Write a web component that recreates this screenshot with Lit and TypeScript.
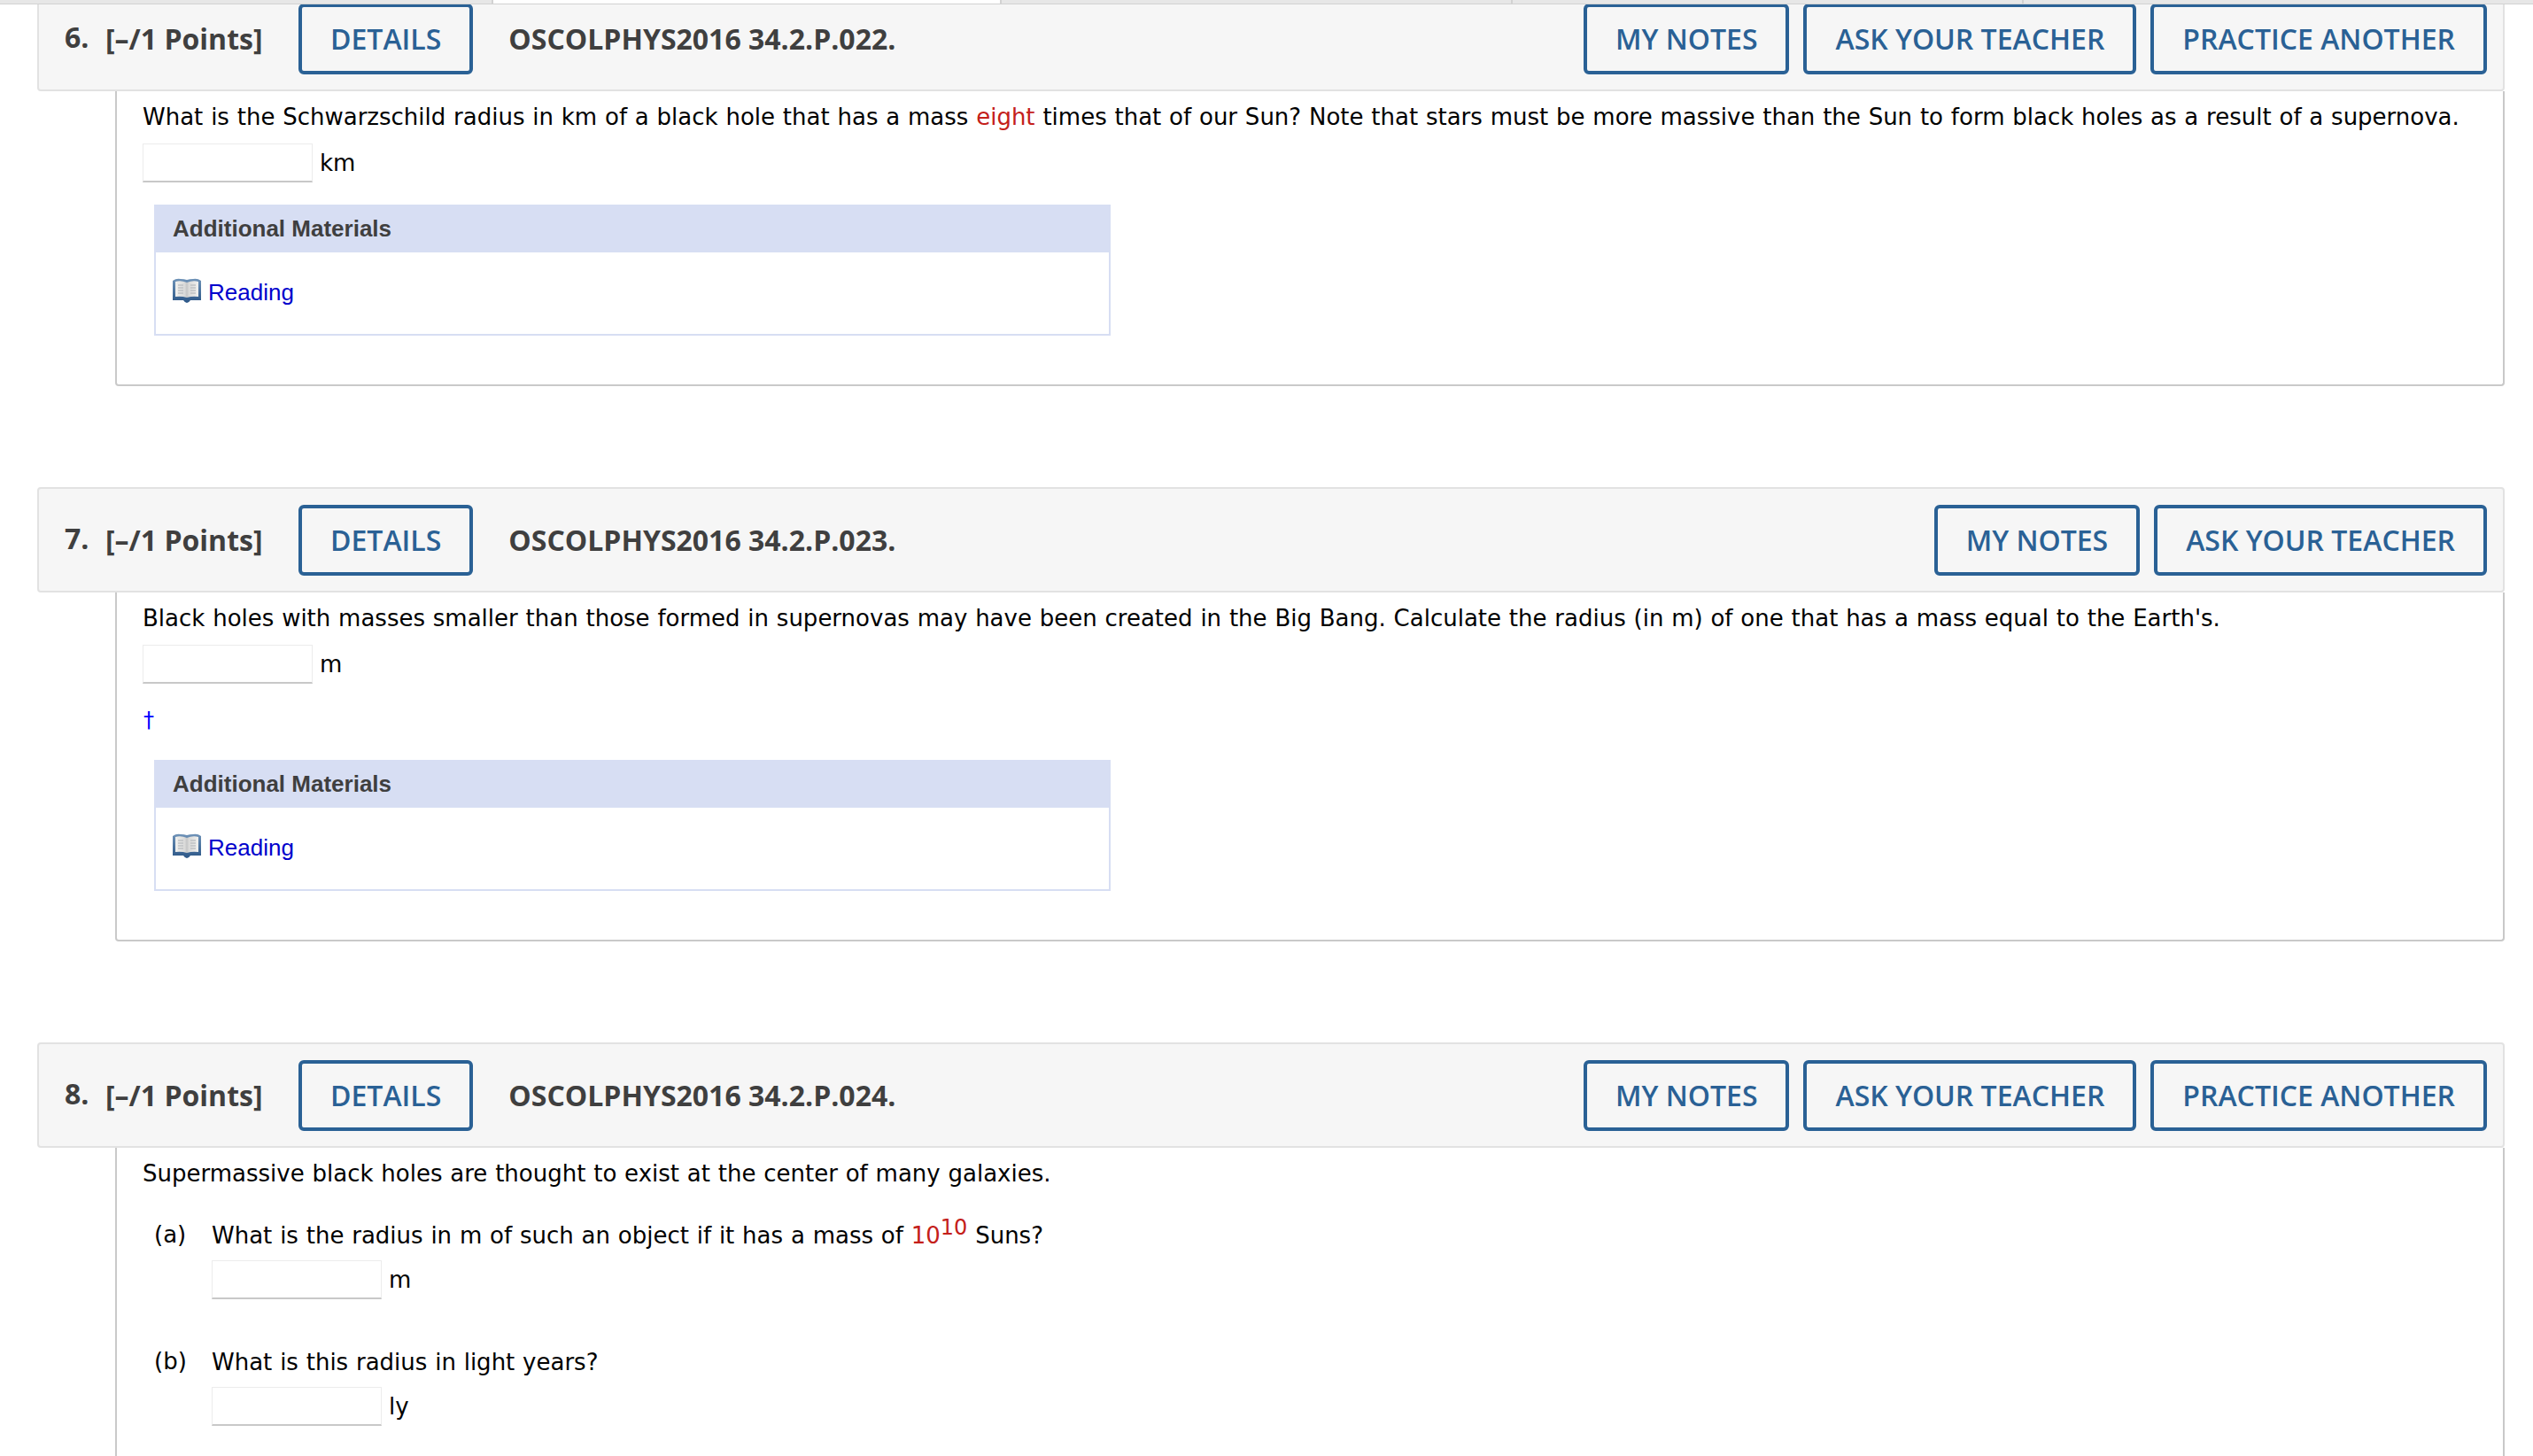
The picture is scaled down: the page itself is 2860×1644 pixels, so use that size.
import { LitElement, css, html, nothing } from "lit";
import { customElement } from "lit/decorators.js";

interface Question {
  num: number;
  code: string;
  practice: boolean;
}

const bookIcon = html`
  <svg class="book" viewBox="0 0 32 28" width="32" height="28" aria-hidden="true">
    <defs>
      <linearGradient id="cover" x1="0" y1="0" x2="0" y2="1">
        <stop offset="0" stop-color="#6f93b8" />
        <stop offset="1" stop-color="#2b5687" />
      </linearGradient>
      <linearGradient id="pages" x1="0" y1="0" x2="1" y2="0">
        <stop offset="0" stop-color="#f0f0ee" />
        <stop offset="0.42" stop-color="#d9d9d8" />
        <stop offset="0.5" stop-color="#c4c5c6" />
        <stop offset="0.58" stop-color="#d9d9d8" />
        <stop offset="1" stop-color="#f0f0ee" />
      </linearGradient>
    </defs>
    <path d="M0 3 Q4 0 9 1 Q13 1 16 2 Q19 1 23 1 Q28 0 32 3 V25 H20 Q18 28 16 28 Q14 28 12 25 H0 Z" fill="url(#cover)" />
    <path d="M3 4 Q9 2 16 5 Q23 2 29 4 V21 Q22 20 16 22 Q10 20 3 21 Z" fill="url(#pages)" />
    <path d="M6 8 H12 M6 11 H12 M6 14 H12 M6 17 H12 M20 8 H26 M20 11 H26 M20 14 H26 M20 17 H26" stroke="#bfc1c4" stroke-width="1.3" />
  </svg>
`;

@customElement("app-root")
export class AppRoot extends LitElement {
  static styles = css`
    :host {
      display: block;
      height: 1644px;
      overflow: hidden;
      position: relative;
      background: #fff;
      font-family: "DejaVu Sans", Verdana, sans-serif;
      font-size: 26px;
      word-spacing: 0.55px;
      color: #000;
    }
    .topbar {
      position: absolute;
      top: 0;
      left: 0;
      right: 0;
      height: 5px;
      display: flex;
      border-bottom: 1px solid #d2d2d2;
      box-sizing: border-box;
      background: #e7e7e7;
    }
    .tab {
      box-sizing: border-box;
      border-right: 2px solid #d2d2d2;
      flex: none;
    }
    .tab.first {
      width: 557px;
    }
    .tab.active {
      width: 574px;
      background: #fff;
    }
    .tab.plain {
      width: 577px;
    }
    .page {
      margin-top: -16px;
      padding-left: 42px;
      width: 2786px;
      display: flex;
      flex-direction: column;
      gap: 114px;
    }
    .head {
      display: flex;
      align-items: center;
      height: 119px;
      box-sizing: border-box;
      padding: 0 18px 0 29px;
      background: #f6f6f6;
      border: 2px solid #e2e2e2;
      border-radius: 4px;
      font-family: "Open Sans", sans-serif;
      font-weight: 700;
      font-size: 32px;
      word-spacing: 0;
      color: #3f3f3f;
    }
    .num {
      width: 46px;
      position: relative;
      top: -2px;
      flex: none;
    }
    .points {
      width: 218px;
      flex: none;
    }
    .code {
      margin-left: 40px;
    }
    .spacer {
      flex: 1;
    }
    .btn {
      box-sizing: border-box;
      height: 80px;
      padding: 0 32px;
      display: flex;
      align-items: center;
      border: 4px solid #2a6195;
      border-radius: 6px;
      color: #2a6195;
      font-weight: 600;
      font-size: 32px;
      white-space: nowrap;
    }
    .right {
      display: flex;
      gap: 16px;
    }
    .body {
      margin-left: 88px;
      padding: 0 30px 0 29px;
      border: 2px solid #c9c9c9;
      border-top: none;
      border-radius: 0 0 4px 4px;
      box-sizing: border-box;
    }
    .body.open {
      padding-bottom: 200px;
    }
    p {
      margin: 0;
      line-height: 32px;
      white-space: nowrap;
    }
    .lead {
      padding-top: 13px;
    }
    .red {
      color: #c4201a;
    }
    sup {
      font-size: 24px;
      line-height: 0;
    }
    .answer {
      display: flex;
      align-items: center;
      gap: 8px;
      margin-top: 14px;
    }
    .field {
      width: 192px;
      height: 44px;
      box-sizing: border-box;
      border: 1px solid #ececec;
      border-bottom: 2px solid #c8c8c8;
      background: #fff;
    }
    .dagger {
      margin-top: 26px;
      color: #0000ff;
      line-height: 30px;
      font-size: 24px;
      padding-left: 1px;
    }
    .materials {
      margin: 25px 0 55px 13px;
      width: 1080px;
      box-sizing: border-box;
      height: 148px;
      border: 2px solid #d7def3;
      border-top: none;
    }
    .dagger + .materials {
      margin-top: 30px;
    }
    .materials h4 {
      margin: 0 -2px;
      height: 54px;
      line-height: 54px;
      padding-left: 21px;
      background: #d7def3;
      font-family: "Liberation Sans", Arial, sans-serif;
      font-size: 26px;
      font-weight: 700;
      word-spacing: 0;
      color: #3f3f3f;
    }
    .reading {
      display: flex;
      align-items: center;
      gap: 8px;
      padding: 27px 0 0 19px;
      font-family: "Liberation Sans", Arial, sans-serif;
      font-size: 26px;
      color: #0000cc;
    }
    .reading span {
      position: relative;
      top: 3px;
    }
    .book {
      flex: none;
    }
    .part {
      display: grid;
      grid-template-columns: 65px 1fr;
      padding-left: 13px;
    }
    .part-a {
      margin-top: 38px;
    }
    .part-b {
      margin-top: 55px;
    }
    .part .answer {
      margin-top: 12px;
    }
  `;

  private header(q: Question) {
    return html`
      <div class="head">
        <span class="num">${q.num}.</span>
        <span class="points">[–/1 Points]</span>
        <span class="btn">DETAILS</span>
        <span class="code">${q.code}</span>
        <span class="spacer"></span>
        <div class="right">
          <span class="btn">MY NOTES</span>
          <span class="btn">ASK YOUR TEACHER</span>
          ${q.practice ? html`<span class="btn">PRACTICE ANOTHER</span>` : nothing}
        </div>
      </div>
    `;
  }

  private answer(unit: string) {
    return html`<div class="answer"><div class="field"></div><span>${unit}</span></div>`;
  }

  private materials() {
    return html`
      <div class="materials">
        <h4>Additional Materials</h4>
        <div class="reading">${bookIcon}<span>Reading</span></div>
      </div>
    `;
  }

  render() {
    return html`
      <div class="page">
        <section>
          ${this.header({ num: 6, code: "OSCOLPHYS2016 34.2.P.022.", practice: true })}
          <div class="body">
            <p class="lead">
              What is the Schwarzschild radius in km of a black hole that has a mass
              <span class="red">eight</span> times that of our Sun? Note that stars must be more
              massive than the Sun to form black holes as a result of a supernova.
            </p>
            ${this.answer("km")} ${this.materials()}
          </div>
        </section>
        <section>
          ${this.header({ num: 7, code: "OSCOLPHYS2016 34.2.P.023.", practice: false })}
          <div class="body">
            <p class="lead">
              Black holes with masses smaller than those formed in supernovas may have been created
              in the Big Bang. Calculate the radius (in m) of one that has a mass equal to the
              Earth's.
            </p>
            ${this.answer("m")}
            <div class="dagger">†</div>
            ${this.materials()}
          </div>
        </section>
        <section>
          ${this.header({ num: 8, code: "OSCOLPHYS2016 34.2.P.024.", practice: true })}
          <div class="body open">
            <p class="lead">Supermassive black holes are thought to exist at the center of many galaxies.</p>
            <div class="part part-a">
              <span>(a)</span>
              <div>
                <p>What is the radius in m of such an object if it has a mass of <span class="red">10<sup>10</sup></span> Suns?</p>
                ${this.answer("m")}
              </div>
            </div>
            <div class="part part-b">
              <span>(b)</span>
              <div>
                <p>What is this radius in light years?</p>
                ${this.answer("ly")}
              </div>
            </div>
          </div>
        </section>
      </div>
      <div class="topbar">
        <div class="tab first"></div>
        <div class="tab active"></div>
        <div class="tab plain"></div>
        <div class="tab plain"></div>
      </div>
    `;
  }
}
